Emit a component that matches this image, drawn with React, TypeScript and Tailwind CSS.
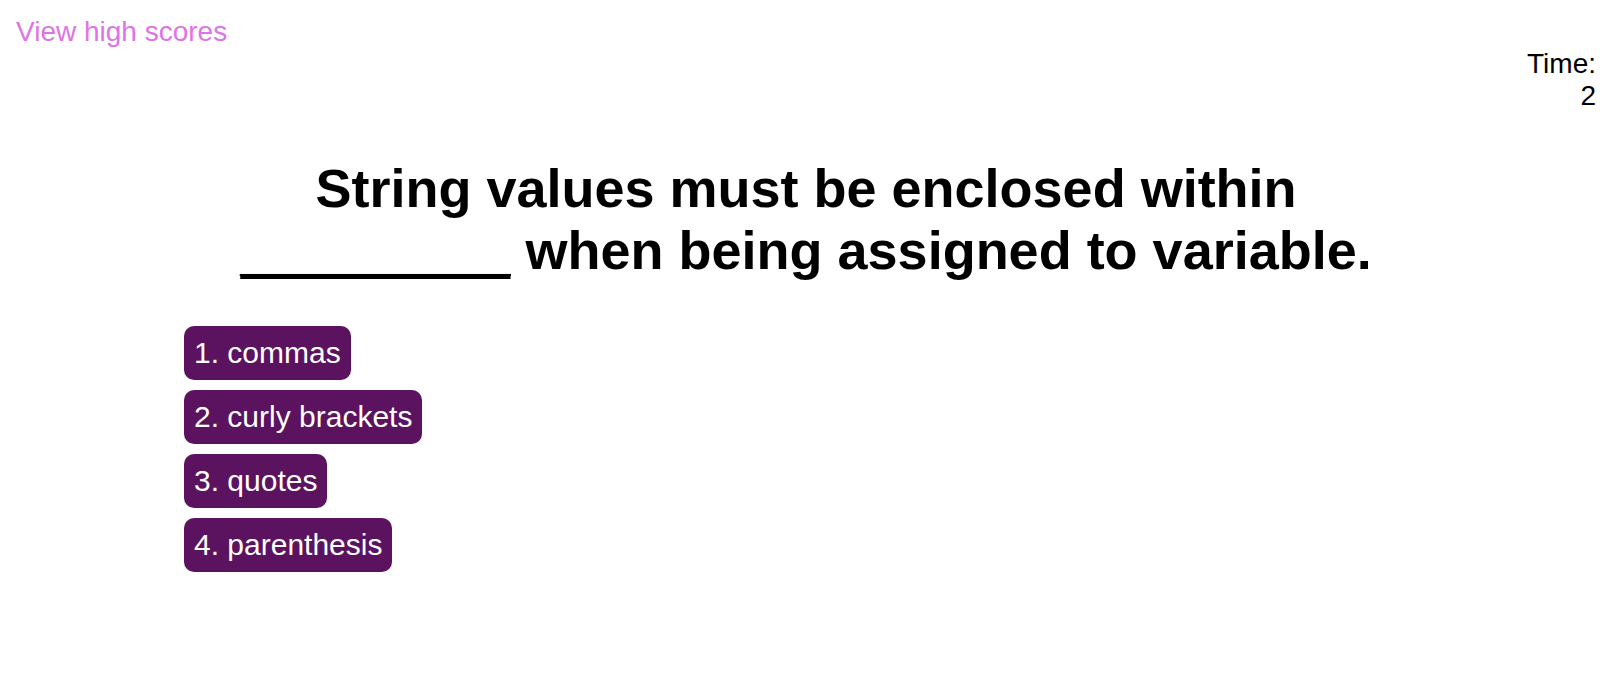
const choices = ["commas", "curly brackets", "quotes", "parenthesis"];

export default function App() {
  return (
    <div className="min-h-screen bg-white p-4 font-['Liberation_Sans',Arial,sans-serif] text-[28px] leading-8 text-black">
      <header>
        <a href="#scores" className="block w-fit text-[#dd74e6]">
          View high scores
        </a>
        <div className="flex flex-col items-end">
          <span>Time:</span>
          <span>2</span>
        </div>
      </header>
      <main className="mx-auto max-w-[1244px] pt-[45px]">
        <h1 className="text-center text-[54px] leading-[62px] font-bold">
          String values must be enclosed within{" "}
          <span className="underline decoration-[5px] underline-offset-[5px] [text-decoration-skip-ink:none]">
            _________
          </span>{" "}
          when being assigned to variable.
        </h1>
        <ol className="mt-[45px] flex flex-col items-start gap-2.5">
          {choices.map((choice, index) => (
            <li key={choice}>
              <button
                type="button"
                className="block cursor-pointer rounded-[10px] bg-[#5c135f] p-2.5 text-[30px] leading-[34px] text-white"
              >
                {index + 1}. {choice}
              </button>
            </li>
          ))}
        </ol>
      </main>
    </div>
  );
}
